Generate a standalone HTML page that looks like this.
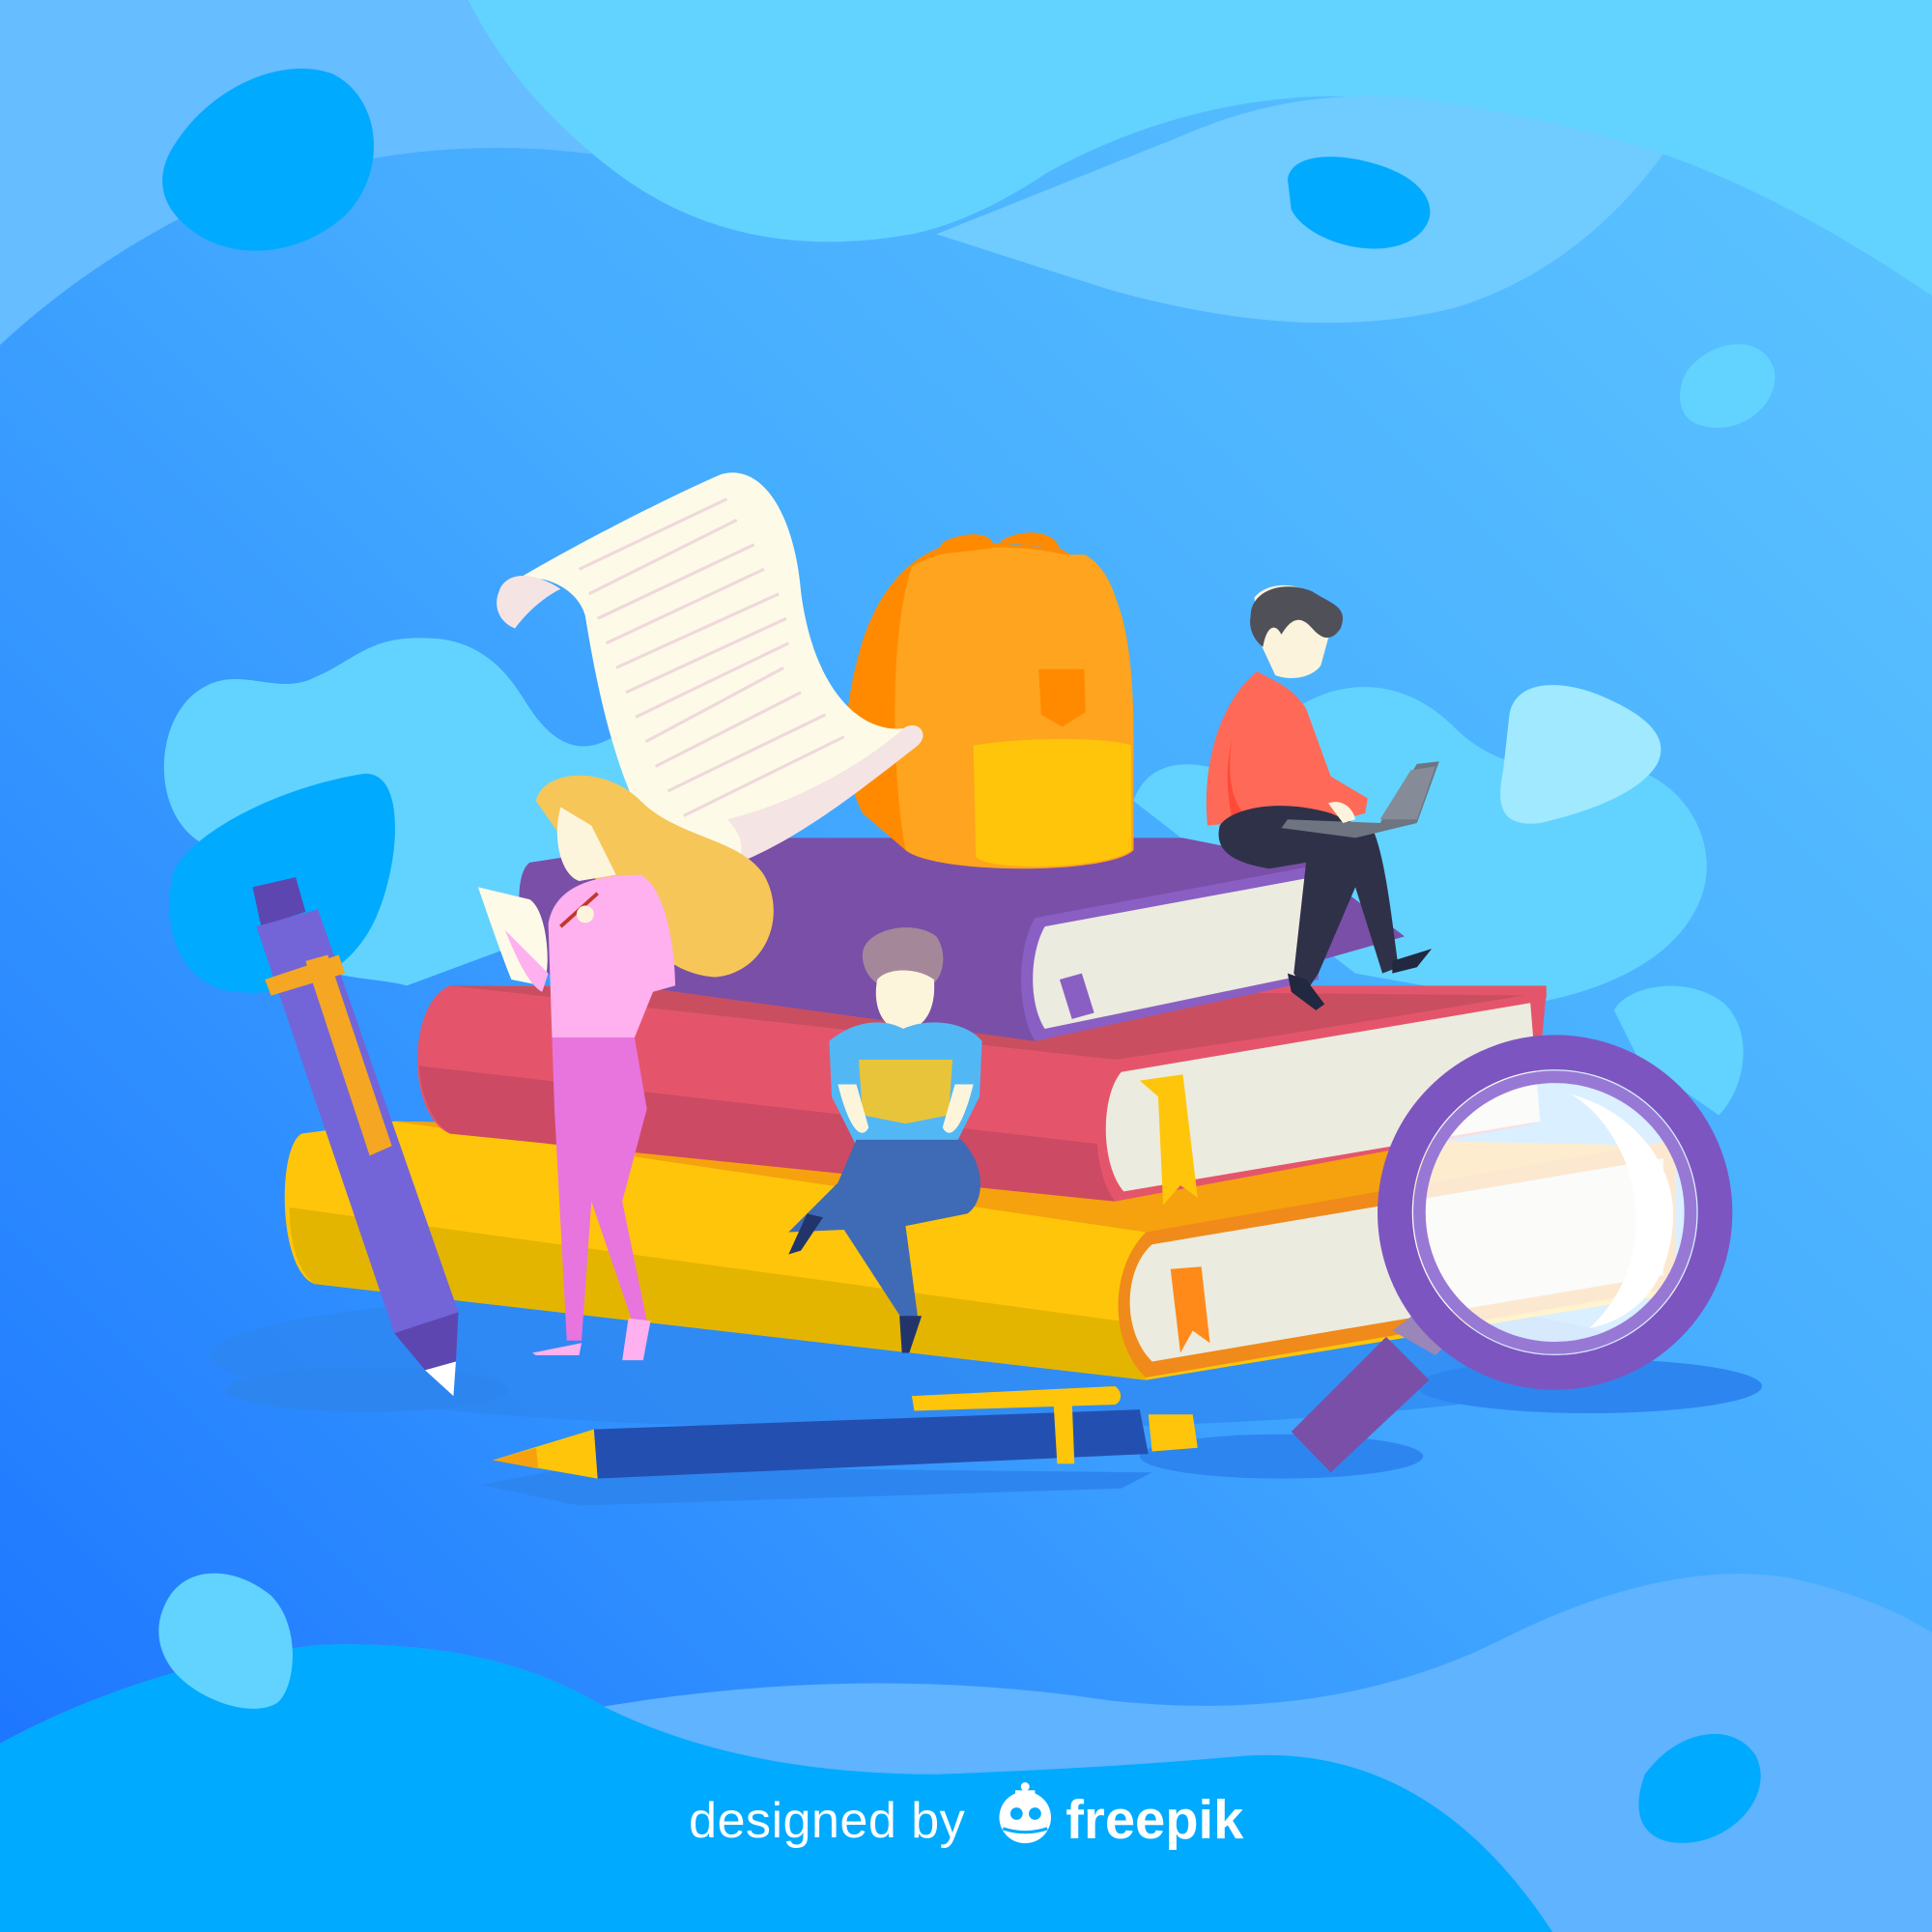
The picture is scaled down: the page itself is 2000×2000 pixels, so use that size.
<!DOCTYPE html>
<html><head><meta charset="utf-8"><style>
html,body{margin:0;padding:0;width:2000px;height:2000px;overflow:hidden}
svg{display:block}
</style></head><body>
<svg width="2000" height="2000" viewBox="0 0 1568 1568" xmlns="http://www.w3.org/2000/svg">
<defs>
<linearGradient id="bg" x1="0" y1="1" x2="1" y2="0">
<stop offset="0" stop-color="#1a72ff"/><stop offset="0.55" stop-color="#45acff"/><stop offset="1" stop-color="#5fc6ff"/>
</linearGradient>
</defs>
<rect width="1568" height="1568" fill="url(#bg)"/>
<path d="M0 0 H400 L500 128 Q330 100 160 170 Q70 215 0 280 Z" fill="#66bdff"/>
<path d="M380 0 H1568 V240 Q1450 160 1350 125 Q1200 80 1080 78 Q960 80 850 140 Q790 180 740 190 Q600 215 500 140 Q420 80 380 0 Z" fill="#62d3ff"/>
<path d="M760 190 Q860 150 960 110 Q1050 70 1150 80 Q1260 95 1350 125 Q1280 220 1180 250 Q1060 280 900 235 Z" fill="#70cbff"/>
<path d="M140 120 C170 70 230 45 270 60 C310 80 315 140 280 175 C240 210 190 210 160 190 C130 170 125 145 140 120Z" fill="#00aaff"/>
<path d="M1045 145 C1050 120 1100 125 1130 138 C1165 153 1170 180 1145 195 C1115 212 1060 195 1048 170Z" fill="#00aaff"/>
<path d="M1370 300 C1390 275 1430 270 1440 300 C1445 330 1410 355 1380 345 C1360 340 1360 315 1370 300Z" fill="#62d3ff"/>
<path d="M0 1568 V1415 Q120 1350 260 1335 Q400 1330 490 1385 Q700 1350 900 1380 Q1080 1400 1220 1330 Q1350 1265 1450 1280 Q1520 1295 1568 1325 V1568Z" fill="#5fb3ff"/>
<path d="M0 1568 V1415 Q120 1350 260 1335 Q400 1330 490 1385 Q600 1440 760 1440 Q900 1435 1010 1425 Q1160 1415 1260 1568Z" fill="#00aaff"/>
<path d="M135 1300 C150 1270 190 1270 220 1295 C245 1320 240 1370 225 1382 C205 1395 160 1380 140 1355 C125 1335 127 1315 135 1300Z" fill="#62d3ff"/>
<path d="M1335 1440 C1360 1405 1405 1395 1425 1425 C1440 1455 1410 1490 1375 1495 C1340 1500 1320 1480 1335 1440Z" fill="#00aaff"/>
<path d="M165 685 C120 660 125 580 165 558 C195 540 225 565 255 550 C290 535 300 515 350 518 C400 520 420 560 430 575 C460 620 490 610 520 580 L600 700 L330 800 C300 790 180 800 165 685Z" fill="#62d3ff"/>
<path d="M920 650 C930 620 960 615 990 625 L1020 600 C1080 540 1140 550 1180 590 C1210 620 1250 630 1300 620 C1360 620 1400 680 1380 730 C1360 780 1300 805 1240 815 L1100 790 Z" fill="#62d3ff"/>
<path d="M1310 820 C1320 800 1370 790 1400 815 C1425 840 1415 885 1395 905 L1330 860Z" fill="#62d3ff"/>
<path d="M1225 580 C1230 550 1270 552 1300 565 C1340 582 1355 600 1345 620 C1330 645 1285 660 1250 668 C1215 672 1215 650 1220 625Z" fill="#a0e9ff"/>
<path d="M140 710 C150 680 220 640 295 628 C330 625 325 700 305 745 C285 790 240 810 190 805 C150 800 130 760 140 710Z" fill="#00aaff"/>
<ellipse cx="750" cy="1100" rx="580" ry="60" fill="#2d86f0" opacity="0.7"/>
<ellipse cx="298" cy="1128" rx="115" ry="18" fill="#2d86f0"/>
<ellipse cx="1290" cy="1125" rx="140" ry="22" fill="#2d86f0"/>
<ellipse cx="1040" cy="1182" rx="115" ry="18" fill="#2d86f0"/>
<path d="M390 1205 L470 1222 L910 1208 L935 1195 L470 1190Z" fill="#2d86f0"/>
<path d="M245 920 L320 910 L1360 930 L1360 1050 L930 1120 L255 1042 C225 1030 225 930 245 920Z" fill="#ffc50a"/>
<path d="M235 980 L930 1075 L930 1120 L255 1042 C240 1030 235 1005 235 980Z" fill="#e3b500"/>
<path d="M320 910 L1360 930 L930 1000Z" fill="#f5a20e"/>
<path d="M930 1000 L1360 925 L1360 1045 L930 1118 C900 1090 900 1030 930 1000Z" fill="#f08a1a"/>
<path d="M935 1010 L1350 940 L1350 1035 L935 1105 C910 1080 912 1030 935 1010Z" fill="#ecebdf"/>
<path d="M950 1030 L975 1028 L982 1090 L968 1080 L958 1098Z" fill="#ff8a1a"/>
<path d="M365 800 L1255 800 L1255 810 L905 975 L365 920 C330 905 330 815 365 800Z" fill="#e4556b"/>
<path d="M340 865 L905 930 L905 975 L365 920 C350 910 342 890 340 865Z" fill="#cc4a63"/>
<path d="M365 800 L1255 808 L905 860Z" fill="#c94f60"/>
<path d="M905 862 L1255 805 L1245 912 L905 975 C885 950 885 885 905 862Z" fill="#e4556b"/>
<path d="M910 870 L1242 814 L1250 910 L912 967 C893 945 893 890 910 870Z" fill="#ecebdf"/>
<path d="M925 877 L960 872 L972 972 L958 962 L944 978 L940 890Z" fill="#ffc50a"/>
<path d="M430 700 L560 680 L960 680 L1060 700 L1140 760 L840 845 L440 790 C420 770 415 710 430 700Z" fill="#7a4fa8"/>
<path d="M840 745 L1070 702 L1070 795 L840 845 C825 820 825 770 840 745Z" fill="#8a5fc4"/>
<path d="M848 752 L1065 712 L1065 790 L848 835 C835 815 835 775 848 752Z" fill="#ecebdf"/>
<path d="M860 795 L878 790 L888 822 L870 827Z" fill="#8a5fc4"/>
<path d="M700 520 C720 460 760 435 800 440 L860 445 C890 460 905 495 910 520 L920 600 L920 690 C900 705 760 710 735 690 L700 660 C680 620 685 570 700 520Z" fill="#ff8a00"/>
<path d="M740 460 C770 440 840 440 880 455 C910 470 920 520 920 600 L920 690 C900 710 760 710 735 690 C725 640 720 520 740 460Z" fill="#ffa41e"/>
<path d="M790 605 C830 598 900 598 918 605 L918 690 C900 705 800 708 792 695Z" fill="#ffc50a"/>
<path d="M795 548 C810 568 880 570 910 555 L910 505 C905 470 890 455 880 450 L790 452 C795 480 795 520 795 548Z" fill="#ffa41e"/>
<path d="M843 543 L880 543 L881 578 L862 590 L845 580Z" fill="#ff8a00"/>
<path d="M765 440 C790 428 810 435 805 445 L760 450Z" fill="#ff8a00"/>
<path d="M810 440 C830 428 855 430 860 445 Z" fill="#ff8a00"/>
<path d="M420 470 C470 440 550 400 585 385 C620 375 645 420 650 480 C660 560 700 600 740 590 C720 620 660 670 600 700 C560 690 525 680 510 640 C490 590 480 530 475 500 C470 480 445 465 420 470Z" fill="#fdfbe8"/>
<path d="M405 480 C410 465 430 462 455 478 C440 485 425 500 418 510 C405 505 400 492 405 480Z" fill="#f5e4e4"/>
<path d="M600 700 C650 680 700 640 745 605 C755 595 745 585 735 590 C700 620 650 650 590 665 C605 680 602 690 600 700Z" fill="#f5e4e4"/>
<g stroke="#f0d8dc" stroke-width="2.5">
<line x1="470" y1="462" x2="590" y2="405"/><line x1="478" y1="482" x2="598" y2="422"/><line x1="485" y1="502" x2="612" y2="442"/><line x1="492" y1="522" x2="620" y2="462"/><line x1="500" y1="542" x2="632" y2="482"/><line x1="508" y1="562" x2="638" y2="502"/><line x1="516" y1="582" x2="640" y2="522"/><line x1="524" y1="602" x2="636" y2="542"/><line x1="532" y1="622" x2="650" y2="562"/><line x1="542" y1="642" x2="670" y2="580"/><line x1="555" y1="662" x2="685" y2="598"/>
</g>
<path d="M205 720 L240 712 L248 740 L212 752Z" fill="#5e46b0"/>
<path d="M208 752 L258 738 L372 1065 L320 1082Z" fill="#7364d8"/>
<path d="M320 1082 L372 1065 L370 1105 L345 1112Z" fill="#5e46b0"/>
<path d="M345 1112 L370 1105 L368 1133Z" fill="#fff"/>
<path d="M215 795 L275 775 L280 790 L220 808Z" fill="#f5a623"/>
<path d="M248 780 L266 775 L318 930 L300 938Z" fill="#f5a623"/>
<path d="M435 650 C440 625 490 620 520 650 C550 680 600 680 620 710 C640 745 620 790 580 793 C540 790 520 760 500 730 L470 700 Z" fill="#f6c659"/>
<path d="M455 655 L480 670 L500 710 L470 715 C455 710 448 680 455 655Z" fill="#fdf4dc"/>
<path d="M445 750 C450 720 480 710 520 710 C540 720 548 770 548 800 L530 805 L515 842 L448 842 Z" fill="#ffb0ee"/>
<path d="M448 842 L515 842 L525 900 L505 975 L525 1072 L514 1075 L480 975 L472 1088 L460 1088 L450 900Z" fill="#e874de"/>
<path d="M432 1098 L472 1090 L470 1100 L435 1100Z" fill="#ffb0ee"/>
<path d="M510 1070 L528 1072 L522 1104 L505 1104Z" fill="#ffb0ee"/>
<path d="M388 720 L430 730 C445 740 448 790 440 800 L415 795 C405 770 395 740 388 720Z" fill="#fdfbe8"/>
<path d="M410 755 C420 780 430 800 440 805 L445 790 Z" fill="#ffb0ee"/>
<line x1="455" y1="752" x2="485" y2="725" stroke="#c0392b" stroke-width="3"/>
<circle cx="475" cy="742" r="7" fill="#fdf4dc"/>
<path d="M700 775 C700 755 740 745 760 760 C770 775 765 795 755 800 L715 800 C705 795 700 785 700 775Z" fill="#a5879a"/>
<path d="M712 795 C720 785 745 785 758 795 C760 820 750 835 733 837 C715 835 708 815 712 795Z" fill="#fdf4dc"/>
<path d="M673 845 C690 830 715 825 733 835 C755 825 785 830 797 845 L795 890 L775 930 L695 930 L675 890Z" fill="#52b7f5"/>
<path d="M695 925 L780 925 C800 945 800 975 785 985 L735 995 L745 1070 L735 1075 L685 998 L640 1000 L680 960Z" fill="#3f6ab5"/>
<path d="M655 985 L668 988 L650 1015 L640 1018Z" fill="#22356b"/>
<path d="M730 1068 L748 1068 L738 1098 L732 1098Z" fill="#22356b"/>
<path d="M697 860 L773 860 L770 905 L735 912 L700 905Z" fill="#e8c43a"/>
<path d="M680 880 C690 920 700 925 705 915 L695 880Z M790 880 C780 920 770 925 765 915 L775 880Z" fill="#fdf4dc"/>
<path d="M1018 485 C1030 470 1060 472 1075 490 C1092 495 1092 510 1078 518 L1072 540 C1065 550 1048 553 1035 548 L1022 520 Z" fill="#fbf3db"/>
<path d="M1015 500 C1015 480 1040 470 1065 480 C1080 490 1095 492 1088 510 C1080 522 1072 518 1065 510 C1058 502 1050 498 1040 515 C1035 505 1028 508 1025 525 C1018 520 1013 510 1015 500Z" fill="#505059"/>
<path d="M1020 545 C1040 555 1050 560 1060 575 L1080 630 L1110 648 L1108 660 L1070 670 L1040 665 L1000 668 L980 670 C975 620 990 570 1020 545Z" fill="#ff6a58"/>
<path d="M1000 600 C995 630 1000 655 1015 665 L1000 665 C995 640 995 620 1000 600Z" fill="#ff4a38"/>
<path d="M990 670 C1000 655 1040 648 1080 660 L1115 675 C1125 700 1130 750 1135 785 L1122 790 L1100 720 L1070 790 L1060 805 L1050 790 L1060 700 L1030 705 C1000 700 985 690 990 670Z" fill="#2f3148"/>
<path d="M1045 790 L1060 795 L1075 815 L1068 820 L1048 805Z M1130 780 L1162 770 L1150 785 L1130 790Z" fill="#22283f"/>
<path d="M1045 665 L1120 668 L1150 620 L1168 618 L1150 668 L1100 680 L1040 672Z" fill="#6e7480"/>
<path d="M1120 665 L1145 625 L1165 622 L1150 665Z" fill="#858c98"/>
<path d="M1078 652 C1088 648 1098 655 1100 665 L1090 668 Z" fill="#fbf3db"/>
<path d="M1125 1085 L1160 1120 L1080 1195 L1048 1162Z" fill="#7a4fa8"/>
<path d="M1130 1080 L1165 1100 L1175 1090 L1150 1065Z" fill="#9a86b8"/>
<circle cx="1262" cy="984" r="128" fill="#ffffff" opacity="0.8"/>
<circle cx="1262" cy="984" r="130" fill="none" stroke="#7d55c0" stroke-width="28"/>
<circle cx="1262" cy="984" r="110" fill="none" stroke="#9878d5" stroke-width="10"/>
<path d="M1275 888 C1320 900 1360 940 1358 990 C1355 1040 1330 1070 1290 1078 C1330 1040 1335 990 1320 945 C1310 920 1295 900 1275 888Z" fill="#ffffff"/>
<path d="M740 1133 L905 1125 C912 1130 910 1138 905 1140 L742 1145Z" fill="#ffc50a"/>
<path d="M482 1160 L925 1144 L932 1180 L485 1200Z" fill="#2350b0"/>
<path d="M400 1185 L482 1160 L485 1200Z" fill="#ffc50a"/>
<path d="M400 1185 L435 1175 L437 1192Z" fill="#f5a20e"/>
<path d="M932 1148 L968 1148 L972 1175 L935 1178Z" fill="#ffc50a"/>
<path d="M855 1138 L870 1137 L872 1188 L858 1188Z" fill="#ffc50a"/>
<text x="559" y="1491" font-family="Liberation Sans, sans-serif" font-size="41" fill="#ffffff" letter-spacing="0.3">designed by</text>
<g fill="#fff">
<circle cx="832" cy="1475" r="21"/>
<circle cx="832" cy="1450" r="3.5"/><rect x="824" y="1453" width="16" height="3"/>
</g>
<circle cx="825" cy="1472" r="5" fill="#00aaff"/><circle cx="840" cy="1472" r="5" fill="#00aaff"/>
<path d="M814 1484 Q832 1490 850 1484" stroke="#00aaff" stroke-width="2.5" fill="none"/>
<text x="865" y="1492" font-family="Liberation Sans, sans-serif" font-weight="bold" font-size="44" fill="#ffffff">freepik</text>
</svg>
</body></html>
